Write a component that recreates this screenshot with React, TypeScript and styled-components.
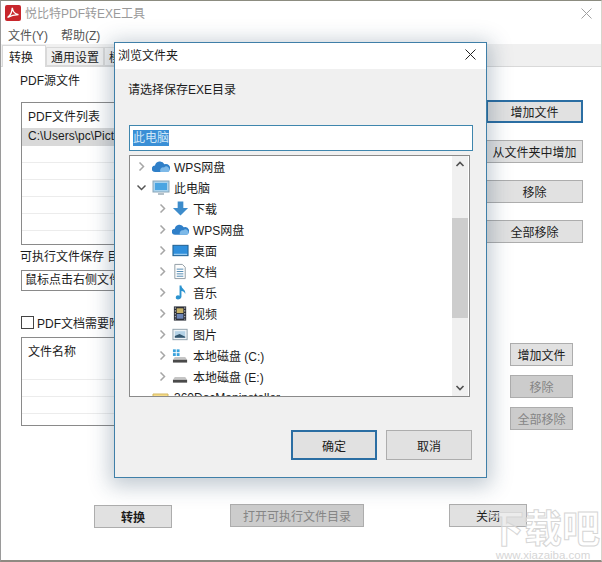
import React from "react";
import styled, { createGlobalStyle } from "styled-components";

const Global = createGlobalStyle`
  html, body {
    margin: 0;
    padding: 0;
    background: #fff;
  }
  body {
    font-family: "Liberation Sans", "Noto Sans CJK SC", sans-serif;
    font-size: 12px;
    color: #1c1c1c;
  }
`;

const Page = styled.div`
  position: relative;
  width: 602px;
  height: 562px;
  overflow: hidden;
  box-sizing: border-box;
  background: #fff;
  border-top: 1px solid #8c8c80;
  border-left: 1px solid #9a9a9a;
  border-right: 1px solid #d8d4cc;
  border-bottom: 2px solid #8f8a82;
  display: flex;
  flex-direction: column;
`;

const TitleBar = styled.div`
  height: 24px;
  flex: none;
  display: flex;
  align-items: center;
  gap: 4px;
  padding: 0 9px 0 4px;
  color: #9a9a9a;
  font-size: 12px;
`;

const TitleText = styled.span`
  flex: 1;
  padding-bottom: 1px;
`;

const CloseGlyph = styled.svg<{ $dim?: boolean }>`
  width: 11px;
  height: 11px;
  flex: none;
  stroke: ${(p) => (p.$dim ? "#a0a0a0" : "#222")};
  stroke-width: 1;
  fill: none;
`;

const MenuBar = styled.div`
  height: 19px;
  flex: none;
  display: flex;
  gap: 13px;
  padding-left: 7px;
  align-items: center;
  color: #555;
`;

const TabStrip = styled.div`
  height: 22px;
  flex: none;
  display: flex;
  align-items: flex-end;
  background: #f0f0f0;
  border-bottom: 1px solid #d9d9d9;
  padding-left: 1px;
`;

const Tab = styled.div<{ $active?: boolean }>`
  height: ${(p) => (p.$active ? 22 : 19)}px;
  padding: 0 ${(p) => (p.$active ? "10px 0 6px" : "4px")};
  margin-bottom: ${(p) => (p.$active ? -1 : 0)}px;
  display: flex;
  align-items: center;
  background: ${(p) => (p.$active ? "#fff" : "#f0f0f0")};
  border: 1px solid #d9d9d9;
  border-bottom: ${(p) => (p.$active ? "none" : "1px solid #d9d9d9")};
  box-sizing: border-box;
  min-width: ${(p) => (p.$active ? 44 : 0)}px;
  color: #222;
`;

const Body = styled.div`
  flex: 1;
  display: flex;
  flex-direction: column;
  padding: 5px 18px 0 19px;
`;

const SectionLabel = styled.div`
  height: 18px;
  line-height: 18px;
`;

const FileRow = styled.div`
  display: grid;
  grid-template-columns: 460px 97px;
  justify-content: space-between;
  margin-top: 12px;
`;

const ListBox = styled.div<{ $height: number }>`
  height: ${(p) => p.$height}px;
  box-sizing: border-box;
  border: 1px solid #8a8a8a;
  margin-left: 1px;
  overflow: hidden;
  background: #fff;
`;

const ListHead = styled.div`
  height: 25px;
  line-height: 28px;
  padding-left: 6px;
`;

const ListRow = styled.div<{ $selected?: boolean; $tall?: number }>`
  height: ${(p) => p.$tall ?? 16}px;
  line-height: 17px;
  padding-left: 6px;
  background: ${(p) => (p.$selected ? "#d9d9d9" : "#fff")};
  border-bottom: 1px solid ${(p) => (p.$selected ? "#d9d9d9" : "#ececec")};
  white-space: nowrap;
`;

const ButtonColumn = styled.div`
  display: flex;
  flex-direction: column;
  gap: 17px;
  margin-top: -2px;
`;

const SmallColumn = styled.div`
  display: flex;
  flex-direction: column;
  gap: 9px;
  width: 63px;
  margin-top: 6px;
`;

const Btn = styled.div<{ $w?: number; $h?: number; $off?: boolean; $focus?: boolean }>`
  width: ${(p) => (p.$w ? `${p.$w}px` : "auto")};
  height: ${(p) => p.$h ?? 23}px;
  flex: none;
  box-sizing: border-box;
  display: flex;
  align-items: center;
  justify-content: center;
  background: ${(p) => (p.$off ? "#cccccc" : "#e1e1e1")};
  border: ${(p) => (p.$focus ? "2px solid #2b6ea3" : "1px solid #adadad")};
  color: ${(p) => (p.$off ? "#858585" : "#1c1c1c")};
  white-space: nowrap;
`;

const SaveLabel = styled.div`
  margin-top: 3px;
  height: 18px;
  line-height: 18px;
`;

const SaveInput = styled.div`
  margin: 4px 0 0 1px;
  width: 460px;
  height: 21px;
  box-sizing: border-box;
  border: 1px solid #8a8a8a;
  line-height: 19px;
  padding-left: 3px;
  white-space: nowrap;
`;

const CheckRow = styled.div`
  margin: 23px 0 0 1px;
  height: 17px;
  display: flex;
  align-items: center;
  gap: 3px;
`;

const CheckBox = styled.span`
  width: 13px;
  height: 13px;
  box-sizing: border-box;
  border: 1px solid #444;
  background: #fff;
`;

const AttachRow = styled.div`
  display: grid;
  grid-template-columns: 460px 63px;
  column-gap: 30px;
  margin-top: 6px;
`;

const BottomRow = styled.div`
  display: flex;
  margin: 74px 0 0 74px;
  align-items: flex-start;
`;

const ConvertBtn = styled(Btn)`
  font-weight: 700;
  margin-right: 58px;
  margin-top: 1px;
`;

const OpenBtn = styled(Btn)`
  margin-right: 85px;
`;

const Watermark = styled.div`
  position: absolute;
  right: 0;
  bottom: -1px;
  width: 116px;
  text-align: center;
  pointer-events: none;
  line-height: 1;
`;

const WatermarkMain = styled.div`
  font-size: 38px;
  font-weight: 700;
  color: rgba(255, 255, 255, 0.4);
  -webkit-text-stroke: 1px #d6d6d6;
`;

const WatermarkUrl = styled.div`
  font-size: 11.5px;
  margin-top: 2px;
  color: #d6d6d6;
`;

const Dialog = styled.div`
  position: absolute;
  left: 113px;
  top: 41px;
  width: 373px;
  height: 436px;
  box-sizing: border-box;
  border: 1px solid #3f7fa8;
  background: #f0f0f0;
  box-shadow: 0 4px 20px 4px rgba(30, 60, 90, 0.28);
  display: flex;
  flex-direction: column;
`;

const DialogTitle = styled.div`
  height: 26px;
  flex: none;
  box-sizing: border-box;
  background: #fff;
  display: flex;
  align-items: center;
  justify-content: space-between;
  padding: 0 10px 3px 3px;
`;

const DialogBody = styled.div`
  flex: 1;
  display: flex;
  flex-direction: column;
  padding: 0 13px 0 14px;
`;

const Prompt = styled.div`
  margin: 12px 0 0 -1px;
  height: 18px;
  line-height: 18px;
`;

const PathInput = styled.div`
  margin-top: 26px;
  width: 344px;
  height: 26px;
  box-sizing: border-box;
  border: 1px solid #3f86ad;
  background: #fff;
  display: flex;
  align-items: center;
  padding-left: 3px;
`;

const Selection = styled.span`
  background: #3a8fd6;
  color: #cfe6f7;
  line-height: 16px;
`;

const Tree = styled.div`
  margin-top: 4px;
  width: 341px;
  height: 242px;
  box-sizing: border-box;
  border: 1px solid #8a8a8a;
  background: #fff;
  display: flex;
  overflow: hidden;
`;

const TreeList = styled.div`
  flex: 1;
  overflow: hidden;
`;

const TreeRow = styled.div<{ $level: number }>`
  height: 21px;
  display: flex;
  align-items: center;
  padding-left: ${(p) => (p.$level ? 28 : 7)}px;
  white-space: nowrap;
`;

const Chevron = styled.svg<{ $hidden?: boolean }>`
  width: 9px;
  height: 9px;
  flex: none;
  fill: none;
  stroke: #a6a6a6;
  stroke-width: 1.5;
  visibility: ${(p) => (p.$hidden ? "hidden" : "visible")};
`;

const DownChevron = styled(Chevron)`
  stroke: #555;
`;

const TreeIcon = styled.svg<{ $level: number }>`
  width: ${(p) => (p.$level ? 17 : 18)}px;
  height: 17px;
  flex: none;
  margin: 0 4px 0 ${(p) => (p.$level ? 5 : 6)}px;
`;

const ScrollBar = styled.div`
  width: 16px;
  flex: none;
  margin-right: 1px;
  background: #f0f0f0;
  display: flex;
  flex-direction: column;
`;

const ScrollArrow = styled.svg`
  width: 16px;
  height: 17px;
  flex: none;
  fill: none;
  stroke: #505050;
  stroke-width: 1.6;
`;

const ScrollTrack = styled.div`
  flex: 1;
  padding-top: 45px;
  display: flex;
  flex-direction: column;
`;

const ScrollThumb = styled.div`
  height: 100px;
  background: #cdcdcd;
`;

const DialogButtons = styled.div`
  margin: 33px 1px 0 0;
  display: flex;
  justify-content: flex-end;
  gap: 9px;
`;

const Cross = ({ dim }: { dim?: boolean }) => (
  <CloseGlyph $dim={dim} viewBox="0 0 11 11">
    <path d="M0.5 0.5 L10.5 10.5 M10.5 0.5 L0.5 10.5" />
  </CloseGlyph>
);

const Cloud = (
  <>
    <path d="M3 14 a3.2 3.2 0 0 1 0-6.4 a5 5 0 0 1 9.4-1.4 a4 4 0 0 1 3 7.8 z" fill="#2f7fc8" />
    <path d="M8.5 14 a3.2 3.2 0 0 1 3.5-4.6 a3.2 3.2 0 0 1 4.5 4.6 z" fill="#7db9e8" />
  </>
);

const icons: Record<string, React.ReactNode> = {
  cloud: Cloud,
  pc: (
    <>
      <rect x="1" y="2" width="16" height="11" fill="#a9d3ee" stroke="#8aa6b8" />
      <rect x="3" y="4" width="12" height="7" fill="#4aa5e2" />
      <rect x="6" y="14" width="6" height="2" fill="#b4c0c8" />
    </>
  ),
  download: <path d="M6 1 H12 V8 H17 L9 16 L1 8 H6 Z" fill="#3d8ccb" />,
  desktop: (
    <>
      <rect x="1" y="3" width="16" height="11" fill="#2f8fdc" stroke="#1d5c8c" />
      <rect x="2" y="12" width="14" height="1" fill="#bfe0f5" />
    </>
  ),
  docs: (
    <>
      <path d="M3 1 H11 L14 4 V16 H3 Z" fill="#fdfdfd" stroke="#8f9ba3" />
      <path d="M5 6 H12 M5 8.5 H12 M5 11 H12 M5 13.5 H12" stroke="#4c87b0" />
    </>
  ),
  music: (
    <path
      d="M8 1 H10 C10 5 15 5 14 10 C13 8 12 7 10 7 V13 C10 16 4 17 4 14 C4 11 7 11 8 12 Z"
      fill="#2b93cf"
    />
  ),
  video: (
    <>
      <rect x="2" y="1" width="13" height="15" fill="#2c2f38" />
      <rect x="5" y="3" width="7" height="5" fill="#c9b46a" />
      <rect x="5" y="9" width="7" height="5" fill="#6d86b8" />
      <path d="M3.5 2 V15 M13.5 2 V15" stroke="#cfd3da" strokeDasharray="1.5 1.5" />
    </>
  ),
  picture: (
    <>
      <rect x="1" y="3" width="15" height="11" fill="#eef3f6" stroke="#8fa0ab" />
      <rect x="3" y="5" width="11" height="7" fill="#b4d2e6" />
      <path d="M3 10 L8 8 L14 11 V12 H3 Z" fill="#33566e" />
    </>
  ),
  driveC: (
    <>
      <rect x="1" y="2" width="3" height="3" fill="#3aa2dc" />
      <rect x="5" y="2" width="3" height="3" fill="#3aa2dc" />
      <rect x="1" y="6" width="3" height="3" fill="#3aa2dc" />
      <rect x="5" y="6" width="3" height="3" fill="#3aa2dc" />
      <path d="M3 10 H14 L16 13 H1 Z" fill="#c5c5c5" />
      <rect x="1" y="13" width="15" height="3" fill="#4a4a4a" />
    </>
  ),
  drive: (
    <>
      <path d="M3 9 H14 L16 12 H1 Z" fill="#c5c5c5" />
      <rect x="1" y="12" width="15" height="3" fill="#4a4a4a" />
    </>
  ),
  folder: <path d="M1 5 H16 V17 H1 Z" fill="#f7dc88" stroke="#d4b761" />,
};

const treeItems = [
  { icon: "cloud", label: "WPS网盘", level: 0 },
  { icon: "pc", label: "此电脑", level: 0, open: true },
  { icon: "download", label: "下载", level: 1 },
  { icon: "cloud", label: "WPS网盘", level: 1 },
  { icon: "desktop", label: "桌面", level: 1 },
  { icon: "docs", label: "文档", level: 1 },
  { icon: "music", label: "音乐", level: 1 },
  { icon: "video", label: "视频", level: 1 },
  { icon: "picture", label: "图片", level: 1 },
  { icon: "driveC", label: "本地磁盘 (C:)", level: 1 },
  { icon: "drive", label: "本地磁盘 (E:)", level: 1 },
  { icon: "folder", label: "360DocManinstaller", level: 0, leaf: true },
];

export default function App() {
  return (
    <>
      <Global />
      <Page>
        <TitleBar>
          <svg width="16" height="16" viewBox="0 0 16 16">
            <rect width="16" height="16" rx="2" fill="#c8262c" />
            <path
              d="M2.5 12.5 C5 11 7 7 7.3 2.8 C7.5 6 10 9 13.5 9.6 C10 9.6 6 10.5 2.5 12.5 Z"
              fill="none"
              stroke="#fff"
              strokeWidth="1.4"
            />
          </svg>
          <TitleText>悦比特PDF转EXE工具</TitleText>
          <Cross dim />
        </TitleBar>
        <MenuBar>
          <span>文件(Y)</span>
          <span>帮助(Z)</span>
        </MenuBar>
        <TabStrip>
          <Tab $active>转换</Tab>
          <Tab>通用设置</Tab>
          <Tab>模式设置</Tab>
        </TabStrip>
        <Body>
          <SectionLabel>PDF源文件</SectionLabel>
          <FileRow>
            <ListBox $height={143}>
              <ListHead>PDF文件列表</ListHead>
              <ListRow $selected $tall={17}>
                C:\Users\pc\Pictures\demo.pdf
              </ListRow>
              <ListRow />
              <ListRow />
              <ListRow />
              <ListRow />
              <ListRow />
            </ListBox>
            <ButtonColumn>
              <Btn $focus>增加文件</Btn>
              <Btn>从文件夹中增加</Btn>
              <Btn>移除</Btn>
              <Btn>全部移除</Btn>
            </ButtonColumn>
          </FileRow>
          <SaveLabel>可执行文件保存 目录</SaveLabel>
          <SaveInput>鼠标点击右侧文件夹选择保存目录</SaveInput>
          <CheckRow>
            <CheckBox />
            <span>PDF文档需要附件</span>
          </CheckRow>
          <AttachRow>
            <ListBox $height={89}>
              <ListHead>文件名称</ListHead>
              <ListRow />
              <ListRow />
              <ListRow />
            </ListBox>
            <SmallColumn>
              <Btn>增加文件</Btn>
              <Btn $off>移除</Btn>
              <Btn $off>全部移除</Btn>
            </SmallColumn>
          </AttachRow>
          <BottomRow>
            <ConvertBtn $w={78}>转换</ConvertBtn>
            <OpenBtn $w={134} $off>
              打开可执行文件目录
            </OpenBtn>
            <Btn $w={78}>关闭</Btn>
          </BottomRow>
        </Body>

        <Watermark>
          <WatermarkMain>下载吧</WatermarkMain>
          <WatermarkUrl>www.xiazaiba.com</WatermarkUrl>
        </Watermark>

        <Dialog>
          <DialogTitle>
            <span>浏览文件夹</span>
            <Cross />
          </DialogTitle>
          <DialogBody>
            <Prompt>请选择保存EXE目录</Prompt>
            <PathInput>
              <Selection>此电脑</Selection>
            </PathInput>
            <Tree>
              <TreeList>
                {treeItems.map((item, i) => (
                  <TreeRow key={i} $level={item.level}>
                    {item.open ? (
                      <DownChevron viewBox="0 0 9 9">
                        <path d="M0.5 2.5 L4.5 6.5 L8.5 2.5" />
                      </DownChevron>
                    ) : (
                      <Chevron viewBox="0 0 9 9" $hidden={item.leaf}>
                        <path d="M2.5 0.5 L6.5 4.5 L2.5 8.5" />
                      </Chevron>
                    )}
                    <TreeIcon $level={item.level} viewBox="0 0 18 17">
                      {icons[item.icon]}
                    </TreeIcon>
                    <span>{item.label}</span>
                  </TreeRow>
                ))}
              </TreeList>
              <ScrollBar>
                <ScrollArrow viewBox="0 0 16 17">
                  <path d="M4.5 10 L8 6.5 L11.5 10" />
                </ScrollArrow>
                <ScrollTrack>
                  <ScrollThumb />
                </ScrollTrack>
                <ScrollArrow viewBox="0 0 16 17">
                  <path d="M4.5 7 L8 10.5 L11.5 7" />
                </ScrollArrow>
              </ScrollBar>
            </Tree>
            <DialogButtons>
              <Btn $w={86} $h={30} $focus>
                确定
              </Btn>
              <Btn $w={86} $h={30}>
                取消
              </Btn>
            </DialogButtons>
          </DialogBody>
        </Dialog>
      </Page>
    </>
  );
}
